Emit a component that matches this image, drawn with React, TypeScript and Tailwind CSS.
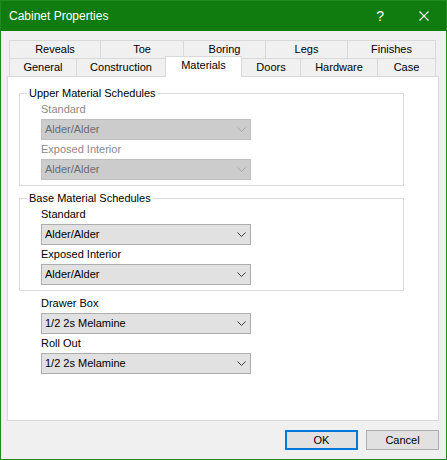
const row1 = [
  { label: "Reveals", cls: "w-[91px] border-l" },
  { label: "Toe", cls: "w-[83px] border-l" },
  { label: "Boring", cls: "w-[82px] border-l" },
  { label: "Legs", cls: "w-[82px] border-l" },
  { label: "Finishes", cls: "w-[89px] border-l border-r" },
];

const row2 = [
  { label: "General", cls: "w-[67px] border-l" },
  { label: "Construction", cls: "w-[89px] border-l" },
  { label: "Materials", cls: "w-[77px] border-l border-r", active: true },
  { label: "Doors", cls: "w-[58px]" },
  { label: "Hardware", cls: "w-[77px] border-l" },
  { label: "Case", cls: "w-[59px] border-l border-r" },
];

function Chevron({ disabled }: { disabled?: boolean }) {
  return (
    <svg width="9" height="5" viewBox="0 0 9 5" className="shrink-0">
      <polyline
        points="0.5,0.5 4.5,4.5 8.5,0.5"
        fill="none"
        stroke={disabled ? "#a6a6a6" : "#3c3c3c"}
        strokeWidth="1"
      />
    </svg>
  );
}

function Select({ value, disabled }: { value: string; disabled?: boolean }) {
  return (
    <div
      className={`flex h-[21px] w-[210px] items-center justify-between border pl-[3px] pr-[4px] ${
        disabled ? "border-[#bfbfbf] bg-[#cccccc] text-[#6d6d6d]" : "border-[#adadad] bg-[#e1e1e1] text-black"
      }`}
    >
      <span>{value}</span>
      <Chevron disabled={disabled} />
    </div>
  );
}

function Label({ text, disabled }: { text: string; disabled?: boolean }) {
  return (
    <div className={`h-[19px] leading-[19px] ${disabled ? "text-[#8a8a8a]" : "text-black"}`}>{text}</div>
  );
}

function Group({ title, disabled, className }: { title: string; disabled?: boolean; className?: string }) {
  return (
    <div className={`relative w-[385px] border border-[#dcdcdc] pl-[21px] pt-[6px] pb-[5px] ${className ?? ""}`}>
      {/* group caption sits over the top border */}
      <span className="absolute -top-[8px] left-[7px] bg-white px-[2px] leading-[14px] text-black">{title}</span>
      <Label text="Standard" disabled={disabled} />
      <Select value="Alder/Alder" disabled={disabled} />
      <Label text="Exposed Interior" disabled={disabled} />
      <Select value="Alder/Alder" disabled={disabled} />
    </div>
  );
}

export default function App() {
  return (
    <div className="flex h-[460px] w-[447px] flex-col border border-[#1f8a1f] bg-[#f0f0f0] font-['Liberation_Sans',Arial,sans-serif] text-[11px] text-black">
      {/* Title bar */}
      <div className="flex h-[30px] shrink-0 items-center bg-[#107c10] pl-[8px] text-white">
        <span className="text-[12px]">Cabinet Properties</span>
        <span className="ml-auto mr-[35px] text-[14px] leading-none">?</span>
        <svg width="10" height="10" viewBox="0 0 10 10" className="mr-[17px]">
          <path d="M0.5 0.5 L9.5 9.5 M9.5 0.5 L0.5 9.5" stroke="white" strokeWidth="1.1" />
        </svg>
      </div>

      <div className="flex flex-1 flex-col pl-[6px] pr-[7px] pt-[9px]">
        {/* Tabs */}
        <div className="ml-[2px] w-[427px]">
          <div className="flex h-[18px]">
            {row1.map((t) => (
              <div key={t.label} className={`h-[18px] border-t border-[#d9d9d9] text-center leading-[17px] ${t.cls}`}>
                {t.label}
              </div>
            ))}
          </div>
          <div className="flex h-[18px] items-start">
            {row2.map((t) =>
              t.active ? (
                <div
                  key={t.label}
                  className={`relative z-10 -mt-[2px] h-[21px] border-t border-[#d9d9d9] bg-white text-center leading-[17px] ${t.cls}`}
                >
                  {t.label}
                </div>
              ) : (
                <div key={t.label} className={`h-[18px] border-t border-[#d9d9d9] text-center leading-[17px] ${t.cls}`}>
                  {t.label}
                </div>
              )
            )}
          </div>
        </div>

        {/* Panel */}
        <div className="h-[345px] border border-[#d9d9d9] bg-white pl-[11px] pt-[16px]">
          <Group title="Upper Material Schedules" disabled />
          <Group title="Base Material Schedules" className="mt-[12px]" />
          <div className="ml-[22px] mt-[3px]">
            <Label text="Drawer Box" />
            <Select value="1/2 2s Melamine" />
            <Label text="Roll Out" />
            <Select value="1/2 2s Melamine" />
          </div>
        </div>

        {/* Buttons */}
        <div className="mt-[9px] flex justify-end gap-[8px]">
          <button className="h-[20px] w-[73px] border-2 border-[#0078d7] bg-[#e1e1e1] text-[11px] leading-none">OK</button>
          <button className="h-[20px] w-[73px] border border-[#adadad] bg-[#e1e1e1] text-[11px] leading-none">Cancel</button>
        </div>
      </div>
    </div>
  );
}
